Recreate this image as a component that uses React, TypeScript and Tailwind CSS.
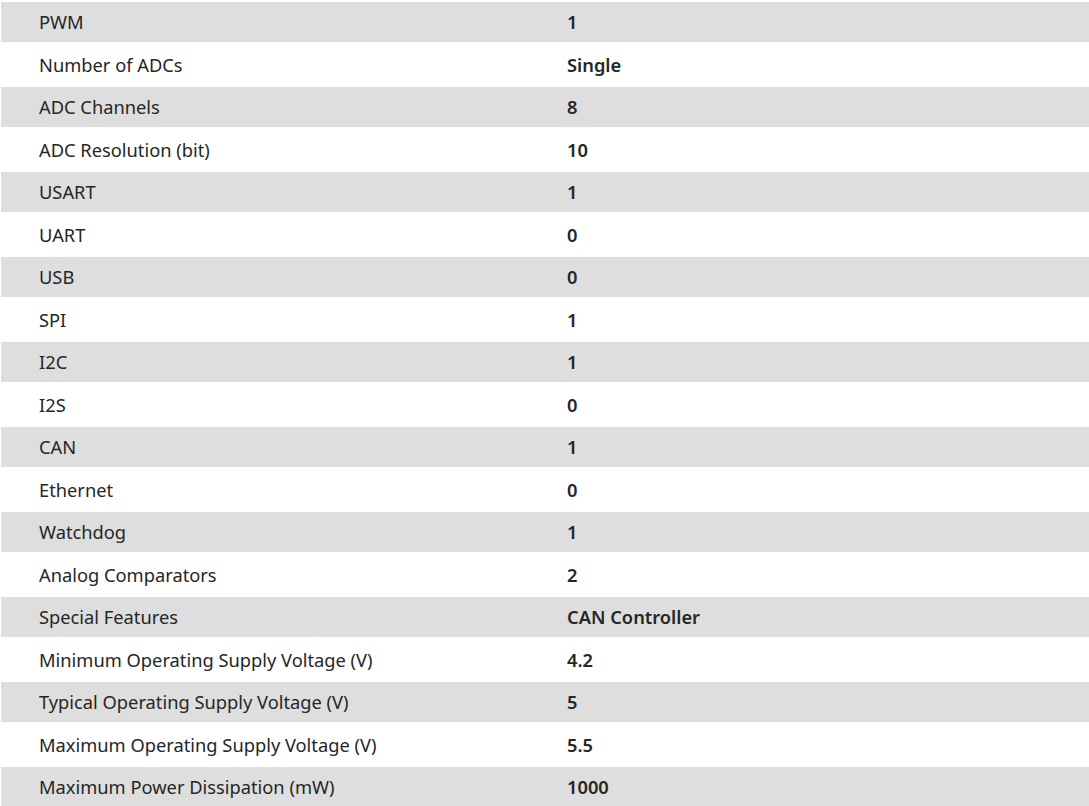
const rows: [string, string][] = [
  ['PWM', '1'],
  ['Number of ADCs', 'Single'],
  ['ADC Channels', '8'],
  ['ADC Resolution (bit)', '10'],
  ['USART', '1'],
  ['UART', '0'],
  ['USB', '0'],
  ['SPI', '1'],
  ['I2C', '1'],
  ['I2S', '0'],
  ['CAN', '1'],
  ['Ethernet', '0'],
  ['Watchdog', '1'],
  ['Analog Comparators', '2'],
  ['Special Features', 'CAN Controller'],
  ['Minimum Operating Supply Voltage (V)', '4.2'],
  ['Typical Operating Supply Voltage (V)', '5'],
  ['Maximum Operating Supply Voltage (V)', '5.5'],
  ['Maximum Power Dissipation (mW)', '1000'],
];

export default function App() {
  return (
    <div className="w-[1089px] h-[806px] overflow-hidden bg-white text-[#262626] text-[18.3px] font-['Noto_Sans',sans-serif]">
      {rows.map(([label, value], i) => (
        <div
          key={label}
          className={`grid grid-cols-[528px_1fr] items-center h-[42.5px] border-t-2 border-b border-l border-white ${i % 2 === 0 ? 'bg-[#dedede]' : 'bg-white'}`}
        >
          <div className="pl-[38px]">{label}</div>
          <div className="pl-[38px] font-semibold">{value}</div>
        </div>
      ))}
    </div>
  );
}
